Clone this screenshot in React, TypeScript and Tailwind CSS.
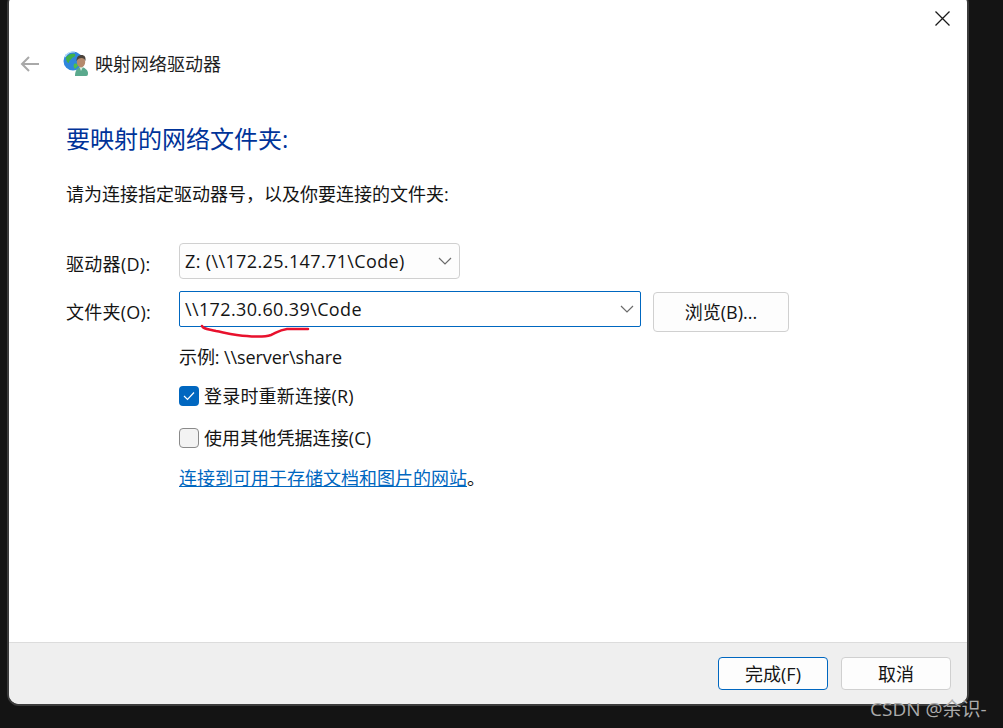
import React from "react";

const font = { fontFamily: '"Open Sans","Noto Sans CJK SC",sans-serif' };

function Chevron() {
  return (
    <svg width="14" height="8" viewBox="0 0 14 8" fill="none" stroke="#6b6b6b" strokeWidth="1.2">
      <path d="M1 1l6 6 6-6" />
    </svg>
  );
}

function Globe() {
  return (
    <svg width="26" height="26" viewBox="0 0 26 26">
      <circle cx="10" cy="10" r="9.500" fill="#2f86dc" />
      <path d="M3 6c3-3 6-4 9-3 1 2-1 3-3 4-1 2-3 2-3 5-2 0-3-3-3-6z" fill="#3fb04a" />
      <path d="M11 13c2-1 4 0 4 2l-3 3c-1-1-2-3-1-5z" fill="#4fbe4a" />
      <path d="M2 6a9 9 0 0 1 10-5" stroke="#bfe2fb" strokeWidth="1.200" fill="none" />
      <path d="M12 25c0-6 3-9 6-9s7 3 7 6-1 3-3 3z" fill="#5aa98d" />
      <path d="M16.500 16l1.500 4 2-4z" fill="#d8efe0" />
      <ellipse cx="18" cy="11" rx="4.200" ry="5.400" fill="#b58a6c" />
      <path d="M13.500 10c0-4 2-6 5-6s4.500 2 4 6c-1-2-2-3-4-3s-4 1-5 3z" fill="#4a423b" />
    </svg>
  );
}

export default function App() {
  return (
    <div className="relative h-[728px] w-[1003px] overflow-hidden bg-[#141414] text-[18px] leading-[24px] text-[#141414]" style={font}>
      <div className="ml-[7px] mt-[-8px] flex h-[714px] w-[962px] flex-col overflow-hidden rounded-[12px] border-2 border-[#3c3c3c] bg-white">
        <div className="flex h-[648px] flex-col bg-white pl-[11px]">
          <div className="flex justify-end pr-[17px] pt-[17px]">
            <svg width="15" height="15" viewBox="0 0 15 15" stroke="#1a1a1a" strokeWidth="1.3">
              <path d="M0.500 0.500l14 14M14.500 0.500l-14 14" />
            </svg>
          </div>
          <div className="mt-[23px] flex h-[30px] items-center">
            <svg width="20" height="18" viewBox="0 0 20 18" fill="none" stroke="#a9a9a9" strokeWidth="2">
              <path d="M19 9H2M9 2L2 9l7 7" />
            </svg>
            <div className="ml-[23px] w-[30px]"><Globe /></div>
            <span className="ml-[2px] text-[#1f1f1f]">映射网络驱动器</span>
          </div>
          <div className="ml-[46px] mt-[44px] text-[24px] leading-[32px] text-[#003399]">要映射的网络文件夹:</div>
          <div className="ml-[46px] mt-[27px]">请为连接指定驱动器号，以及你要连接的文件夹:</div>

          <div className="ml-[46px] mt-[37px] flex items-start">
            <div className="w-[113px] pt-[9px] tracking-[0.3px]">驱动器(D):</div>
            <div className="flex h-[36px] w-[281px] items-center justify-between rounded-[4px] border border-[#d0d0d0] bg-[#fdfdfd] pl-[5px] pr-[7px]">
              <span className="tracking-[0.37px]">Z: (\\172.25.147.71\Code)</span>
              <Chevron />
            </div>
          </div>

          <div className="relative ml-[46px] mt-[12px] flex items-start">
            <div className="w-[113px] pt-[9px] tracking-[0.25px]">文件夹(O):</div>
            <div className="flex h-[36px] w-[462px] items-center justify-between rounded-[2px] border border-[#0067c0] bg-white pl-[5px] pr-[6px]">
              <span className="tracking-[0.37px]">\\172.30.60.39\Code</span>
              <Chevron />
            </div>
            <button className="ml-[12px] mt-[1px] h-[40px] w-[136px] rounded-[4px] border border-[#d0d0d0] bg-[#fdfdfd] text-[18px]">浏览(B)...</button>
            <svg className="absolute left-[133px] top-[33px]" width="112" height="18" viewBox="0 0 112 18" fill="none" stroke="#e8112d" strokeWidth="2.500" strokeLinecap="round">
              <path d="M3 2c1 3 6 3 14 5 10 2 20 5 31 5 10 1 18 1 24-1 5-2 8-5 16-6h21" />
            </svg>
          </div>

          <div className="ml-[159px] mt-[13px] tracking-[-0.1px]">示例: \\server\share</div>
          <div className="ml-[159px] mt-[15px] flex items-center">
            <div className="flex h-[20px] w-[20px] items-center justify-center rounded-[4px] bg-[#0067c0]">
              <svg width="12" height="10" viewBox="0 0 12 10" fill="none" stroke="#fff" strokeWidth="1.2">
                <path d="M1 5l3.500 3.500L11 1.500" />
              </svg>
            </div>
            <span className="ml-[5px] tracking-[0.2px]">登录时重新连接(R)</span>
          </div>
          <div className="ml-[159px] mt-[18px] flex items-center">
            <div className="h-[20px] w-[20px] rounded-[4px] border border-[#8a8a8a] bg-[#f3f3f3]" />
            <span className="ml-[5px] tracking-[0.1px]">使用其他凭据连接(C)</span>
          </div>
          <div className="ml-[159px] mt-[16px]">
            <span className="text-[#0067c0] underline">连接到可用于存储文档和图片的网站</span>。
          </div>
        </div>

        <div className="flex flex-1 items-start justify-end gap-[13px] border-t border-[#dcdcdc] bg-[#efefef] pr-[16px] pt-[14px]">
          <button className="h-[33px] w-[110px] rounded-[4px] border border-[#0067c0] bg-[#fdfdfd] text-[18px] leading-[24px]">完成(F)</button>
          <button className="h-[33px] w-[110px] rounded-[4px] border border-[#d0d0d0] bg-[#fdfdfd] text-[18px] leading-[24px]">取消</button>
        </div>
      </div>
      <div className="absolute left-[870px] top-[697px] text-[19px] leading-[24px] text-[#ababab]">CSDN @余识-</div>
    </div>
  );
}
